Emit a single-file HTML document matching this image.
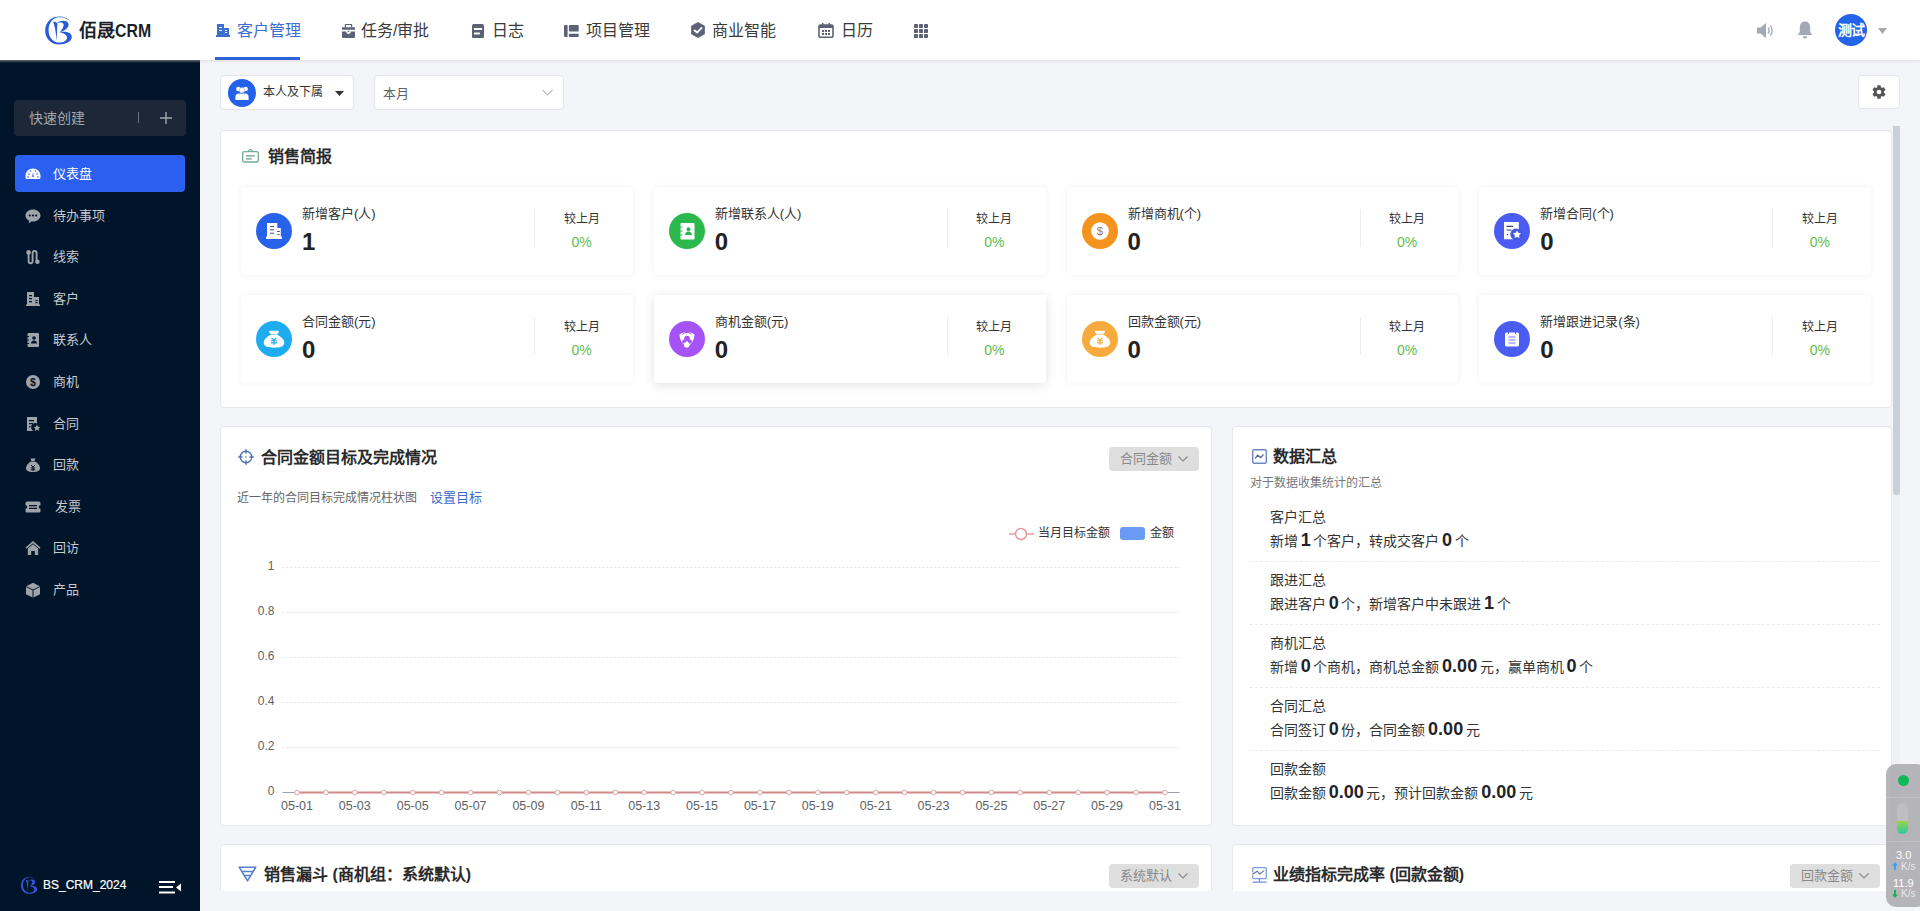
<!DOCTYPE html>
<html lang="zh-CN"><head><meta charset="utf-8">
<style>
*{box-sizing:border-box;margin:0;padding:0}
html,body{width:1920px;height:911px;overflow:hidden}
body{font-family:"Liberation Sans",sans-serif;background:#f3f5f9;position:relative;color:#333}
.abs{position:absolute}
#hdr{position:absolute;left:0;top:0;width:1920px;height:60px;background:#fff;box-shadow:0 1px 3px rgba(0,0,0,.10);z-index:5}
.nav{position:absolute;top:0;height:60px;display:flex;align-items:center;font-size:16px;color:#3a3a3a;white-space:nowrap}
.nav svg{display:block}
.nav span{position:relative;top:-1px}
#side{position:absolute;left:0;top:60px;width:200px;height:851px;background:#001529;z-index:4}
.mi{position:absolute;left:15px;width:170px;height:37px;border-radius:4px;color:#c6c9ce;font-size:13px;line-height:37px}
.mi .ic{position:absolute;left:10px;top:11px;width:16px;height:16px}
.mi .tx{position:absolute;left:38px;top:0}
#content{position:absolute;left:220px;top:126px;width:1680px;height:765px;overflow:hidden}
.panel{position:absolute;background:#fff;border:1px solid #e6e8ec;border-radius:4px}
.card{position:absolute;width:391.75px;height:88px;background:#fff;border-radius:3px;box-shadow:0 0 6px rgba(0,0,0,.06)}
.card .circ{position:absolute;left:15px;top:26px;width:36px;height:36px;border-radius:50%}
.card .lab{position:absolute;left:61px;top:18px;font-size:13px;color:#333;line-height:18px;white-space:nowrap}
.card .val{position:absolute;left:61px;top:41px;font-size:24px;font-weight:bold;color:#222;line-height:28px}
.card .div{position:absolute;left:293px;top:22px;width:1px;height:38px;background:#ececec}
.card .cmp{position:absolute;left:300px;width:81px;text-align:center;top:23.5px;font-size:12px;color:#333;line-height:16px}
.card .pct{position:absolute;left:300px;width:81px;text-align:center;top:46px;font-size:14px;color:#62bd4e;line-height:18px}
.ptitle{position:absolute;font-size:16px;font-weight:bold;color:#2a2a2a;line-height:20px;white-space:nowrap}
.btn{position:absolute;width:90px;height:24px;border-radius:4px;background:#dedede;font-size:13px;color:#888;line-height:24px}
.dl{position:absolute;left:37px;font-size:14px;color:#333;line-height:20px;white-space:nowrap}
.dv{position:absolute;left:37px;font-size:14px;color:#333;line-height:20px;white-space:nowrap;word-spacing:-1.2px}
.dv b{font-size:18px;color:#1f2329;font-weight:bold}
.dsep{position:absolute;left:17px;width:630px;height:0;border-top:1px dashed #ebebeb}
</style></head>
<body>
<div id="hdr">
  <!-- logo -->
  <svg class="abs" style="left:40px;top:10px" width="40" height="40" viewBox="0 0 40 40">
    <path d="M31.6 12.5C27 6.8 20.5 5.4 14.5 7.2 8 9.3 5.2 15 5.2 20.8 5.2 28.8 11 34.5 19 34.5 25 34.5 29.5 31.5 31.5 27.5 29 30.5 25 32.6 19.5 32.6 13 32.6 8.6 27.2 8.6 20.2 8.6 14.2 11.5 9.2 17 7.6 22 6.3 27.5 8.2 31.6 12.5Z" fill="#2a5bd7"/>
    <path d="M13 11.8C14.8 11.6 17.2 12 17.4 13.8L16.6 30.8C16.1 25.5 15.5 17.5 13 11.8Z" fill="#2a5bd7"/>
    <path d="M17 13.2C20.5 10.3 26.5 9.8 28.2 13 29.6 15.8 27.5 20 20 22.3 21.8 19.8 24 16.8 23.6 14.6 23.1 12.4 20 12.2 17 13.2Z" fill="#2a5bd7"/>
    <path d="M19.5 22.2C26 20.8 31.8 22.5 31.8 27 31.8 31 27 34.5 19.5 33.8 24 32.2 27.3 30 27 27.2 26.6 24.6 23.5 23 19.5 22.2Z" fill="#2a5bd7"/>
  </svg>
  <div class="abs" style="left:79px;top:18px;font-size:18px;font-weight:bold;color:#1b1f2a;line-height:26px;white-space:nowrap">佰晟<span style="display:inline-block;transform:scaleX(.88);transform-origin:0 50%">CRM</span></div>
  <div class="nav" style="left:216px;color:#3b6fd1">
    <svg width="14" height="14" viewBox="0 0 14 14"><path d="M1 1h7v11H1z M8 5h5v7H8z M0 12h14v2H0z" fill="#3b6fd1"/><path d="M3 4h3v1H3zM3 7h3v1H3zM9 7h2v1H9zM9 9h2v1H9z" fill="#fff"/></svg>
    <span style="margin-left:7px">客户管理</span>
  </div>
  <div class="abs" style="left:215px;top:57px;width:85px;height:3px;background:#2f64d6"></div>
  <div class="nav" style="left:341px">
    <svg width="13" height="14" viewBox="0 0 13 14" style="margin-left:1px;position:relative;top:1px"><path d="M3.4 3.2V1.3A1 1 0 0 1 4.4.3h4.2a1 1 0 0 1 1 1v1.9" fill="none" stroke="#5d6175" stroke-width="1.3"/><rect x="0" y="3.2" width="13" height="2.6" rx=".5" fill="#5d6175"/><path d="M0 7.5h4.1a2.4 2.4 0 0 0 4.8 0H13v5.3a1.2 1.2 0 0 1-1.2 1.2H1.2A1.2 1.2 0 0 1 0 12.8z" fill="#5d6175"/><circle cx="6.5" cy="7.4" r=".8" fill="#5d6175"/></svg>
    <span style="margin-left:6px">任务/审批</span>
  </div>
  <div class="nav" style="left:472px">
    <svg width="12" height="14" viewBox="0 0 12 14" style="position:relative;top:0.5px"><rect x="0" y="0" width="12" height="14.2" rx="1.8" fill="#5d6175"/><rect x="1.8" y="4" width="8.4" height="1.9" rx=".6" fill="#fff"/><rect x="1.8" y="8.6" width="6.2" height="1.8" rx=".6" fill="#fff"/></svg>
    <span style="margin-left:8px">日志</span>
  </div>
  <div class="nav" style="left:564px">
    <svg width="15" height="12" viewBox="0 0 15 12" style="position:relative;top:1px"><rect x="0" y="0" width="3.6" height="12" rx="1" fill="#5d6175"/><rect x="4.9" y="0" width="9.8" height="6.6" rx=".8" fill="#5d6175"/><rect x="4.9" y="8.8" width="9.8" height="3.2" rx=".8" fill="#5d6175"/></svg>
    <span style="margin-left:7px">项目管理</span>
  </div>
  <div class="nav" style="left:690px">
    <svg width="14" height="16" viewBox="0 0 14 16" style="margin-left:1px"><path d="M7 0.2L13.8 4.1v7.8L7 15.8 0.2 11.9V4.1z" fill="#5d6175" stroke="#5d6175" stroke-width=".4" stroke-linejoin="round"/><path d="M3.6 8.4l2.6 2.2 4.3-4.7" fill="none" stroke="#fff" stroke-width="1.9" stroke-linecap="round" stroke-linejoin="round"/></svg>
    <span style="margin-left:6.5px">商业智能</span>
  </div>
  <div class="nav" style="left:818px">
    <svg width="16" height="15" viewBox="0 0 16 15"><rect x="1" y="2" width="14" height="12.3" rx="1.5" fill="none" stroke="#5d6175" stroke-width="1.6"/><rect x="1" y="2" width="14" height="3" fill="#5d6175"/><rect x="4" y="0" width="1.5" height="3" fill="#5d6175"/><rect x="10.5" y="0" width="1.5" height="3" fill="#5d6175"/><path d="M4 7h2v2H4zM7 7h2v2H7zM10 7h2v2h-2zM4 10h2v2H4zM7 10h2v2H7zM10 10h2v2h-2z" fill="#5d6175"/></svg>
    <span style="margin-left:7px">日历</span>
  </div>
  <svg class="abs" style="left:914px;top:24px" width="14" height="14" viewBox="0 0 14 14"><g fill="#5d6175"><rect x="0" y="0" width="4" height="4" rx=".8"/><rect x="5" y="0" width="4" height="4" rx=".8"/><rect x="10" y="0" width="4" height="4" rx=".8"/><rect x="0" y="5" width="4" height="4" rx=".8"/><rect x="5" y="5" width="4" height="4" rx=".8"/><rect x="10" y="5" width="4" height="4" rx=".8"/><rect x="0" y="10" width="4" height="4" rx=".8"/><rect x="5" y="10" width="4" height="4" rx=".8"/><rect x="10" y="10" width="4" height="4" rx=".8"/></g></svg>
  <!-- right -->
  <svg class="abs" style="left:1757px;top:22px" width="17" height="17" viewBox="0 0 17 17"><path d="M0 5.5h3.5L9 1v15L3.5 11.5H0z" fill="#a3a9b7"/><path d="M11 5.5c1.3 1.5 1.3 4.5 0 6M13.3 3.5c2.4 2.6 2.4 7.4 0 10" fill="none" stroke="#a3a9b7" stroke-width="1.3"/></svg>
  <svg class="abs" style="left:1797px;top:21px" width="16" height="18" viewBox="0 0 16 18"><path d="M8 0.5c3.4 0 5.2 2.6 5.2 6v4.5L15.5 14H.5l2.3-3V6.5C2.8 3.1 4.6.5 8 .5z" fill="#a3a9b7"/><path d="M5.8 15.3h4.4a2.2 2.2 0 0 1-4.4 0z" fill="#a3a9b7"/></svg>
  <div class="abs" style="left:1835px;top:14px;width:32px;height:32px;border-radius:50%;background:#2464ea;color:#fff;font-size:14px;font-weight:bold;line-height:32px;text-align:center;letter-spacing:-1px">测试</div>
  <svg class="abs" style="left:1878px;top:28px" width="9" height="6" viewBox="0 0 9 6"><path d="M0 0h9L4.5 6z" fill="#a8a8a8"/></svg>
</div>

<div id="side">
  <div class="abs" style="left:0;top:0;width:200px;height:3px;background:linear-gradient(rgba(190,195,200,.55),rgba(190,195,200,0))"></div>
  <div class="abs" style="left:14px;top:40px;width:172px;height:36px;background:#1c2838;border-radius:4px;color:#a3a7ae;font-size:14px;line-height:36px">
    <span class="abs" style="left:15px">快速创建</span>
    <span class="abs" style="left:124px;top:12px;width:1px;height:11px;background:#6b727c"></span>
    <svg class="abs" style="left:146px;top:12px" width="12" height="12" viewBox="0 0 12 12"><path d="M6 0v12M0 6h12" stroke="#a3a7ae" stroke-width="1.4"/></svg>
  </div>
  <div class="mi" style="top:95px;background:#2a5ff0;color:#fff">
    <svg class="ic" viewBox="0 0 16 16"><path d="M8 2.5C3.8 2.5.5 5.7.5 9.8v1.7a1.5 1.5 0 0 0 1.5 1.5h12a1.5 1.5 0 0 0 1.5-1.5V9.8c0-4.1-3.3-7.3-7.5-7.3z" fill="#fff"/><path d="M8 6l-.8 5h1.6z" fill="#2a5ff0"/><circle cx="4" cy="8" r=".8" fill="#2a5ff0"/><circle cx="12" cy="8" r=".8" fill="#2a5ff0"/><circle cx="5.5" cy="5" r=".8" fill="#2a5ff0"/><circle cx="10.5" cy="5" r=".8" fill="#2a5ff0"/><circle cx="3" cy="11" r=".8" fill="#2a5ff0"/><circle cx="13" cy="11" r=".8" fill="#2a5ff0"/></svg>
    <span class="tx">仪表盘</span>
  </div>
  <div class="mi" style="top:136.6px">
    <svg class="ic" viewBox="0 0 16 16"><path d="M8 1.5c4.2 0 7.5 2.7 7.5 6s-3.3 6-7.5 6c-.6 0-1.2 0-1.7-.1L3.8 15.5 4 12.6C1.9 11.5.5 9.6.5 7.5c0-3.3 3.3-6 7.5-6z" fill="#9ea2a9"/><circle cx="4.8" cy="7.5" r="1.1" fill="#001529"/><circle cx="8" cy="7.5" r="1.1" fill="#001529"/><circle cx="11.2" cy="7.5" r="1.1" fill="#001529"/></svg>
    <span class="tx">待办事项</span>
  </div>
  <div class="mi" style="top:178.2px">
    <svg class="ic" viewBox="0 0 16 16"><circle cx="3.6" cy="3.4" r="2.3" fill="#9ea2a9"/><circle cx="12.4" cy="12.8" r="2.3" fill="#9ea2a9"/><path d="M3.6 4v8.3a2 2 0 0 0 4 0V4a2 2 0 0 1 4 0v8" fill="none" stroke="#9ea2a9" stroke-width="1.9"/></svg>
    <span class="tx">线索</span>
  </div>
  <div class="mi" style="top:219.8px">
    <svg class="ic" viewBox="0 0 16 16"><path d="M2 1h7v12.5H2z M9 6h5v7.5H9z M1 13.5h14V15H1z" fill="#9ea2a9"/><path d="M4 4h3v1.2H4zM4 7h3v1.2H4zM4 10h3v1.2H4zM10.5 9h2v1.2h-2zM10.5 11h2v1.2h-2z" fill="#001529"/></svg>
    <span class="tx">客户</span>
  </div>
  <div class="mi" style="top:261.4px">
    <svg class="ic" viewBox="0 0 16 16"><rect x="2.5" y="1" width="11.5" height="14" rx="1.2" fill="#9ea2a9"/><path d="M1.5 4h2.5v1H1.5zM1.5 7.5h2.5v1H1.5zM1.5 11h2.5v1H1.5z" fill="#001529"/><circle cx="9" cy="6" r="1.8" fill="#001529"/><path d="M5.8 11.5c.5-2 1.7-3 3.2-3s2.7 1 3.2 3z" fill="#001529"/></svg>
    <span class="tx">联系人</span>
  </div>
  <div class="mi" style="top:303px">
    <svg class="ic" viewBox="0 0 16 16"><circle cx="8" cy="8" r="7" fill="#9ea2a9"/><text x="8" y="11.8" font-size="10.5" text-anchor="middle" fill="#001529" font-family="Liberation Sans" font-weight="bold">$</text></svg>
    <span class="tx">商机</span>
  </div>
  <div class="mi" style="top:344.6px">
    <svg class="ic" viewBox="0 0 16 16"><path d="M2 1h10v6.5a4 4 0 0 0-3.5 7.5H2z" fill="#9ea2a9"/><path d="M4 4h5v1.2H4zM4 7h4v1.2H4zM4 10h1.5v1.2H4z" fill="#001529"/><path d="M12 8.5l1.1 2.2 2.4.3-1.8 1.6.5 2.4-2.2-1.2-2.2 1.2.5-2.4L8.5 11l2.4-.3z" fill="#9ea2a9"/></svg>
    <span class="tx">合同</span>
  </div>
  <div class="mi" style="top:386.2px">
    <svg class="ic" viewBox="0 0 16 16"><path d="M5.5 1.5h5l-1 2.5h-3z" fill="#9ea2a9"/><path d="M6 4.5h4c3 1.5 5 4 5 6.5 0 2.8-2.5 4-7 4s-7-1.2-7-4c0-2.5 2-5 5-6.5z" fill="#9ea2a9"/><path d="M6 8l2 2 2-2M5.8 11h4.4M5.8 12.8h4.4M8 10v4" fill="none" stroke="#001529" stroke-width="1"/></svg>
    <span class="tx">回款</span>
  </div>
  <div class="mi" style="top:427.8px">
    <svg class="ic" viewBox="0 0 16 16"><path d="M2 2.5h12a1.5 1.5 0 0 1 1.5 1.5v2.3a1.7 1.7 0 0 0 0 3.4V12a1.5 1.5 0 0 1-1.5 1.5H2A1.5 1.5 0 0 1 .5 12V9.7a1.7 1.7 0 0 0 0-3.4V4A1.5 1.5 0 0 1 2 2.5z" fill="#9ea2a9"/><path d="M4 6h8v1.3H4zM4 8.8h8v1.3H4z" fill="#001529"/></svg>
    <span class="tx" style="left:40px">发票</span>
  </div>
  <div class="mi" style="top:469.4px">
    <svg class="ic" viewBox="0 0 16 16"><path d="M8 1L.5 7.5l1 1.2L8 3.2l6.5 5.5 1-1.2z" fill="#9ea2a9"/><path d="M2.8 8.5L8 4.2l5.2 4.3V15H9.8v-4H6.2v4H2.8z" fill="#9ea2a9"/></svg>
    <span class="tx">回访</span>
  </div>
  <div class="mi" style="top:511px">
    <svg class="ic" viewBox="0 0 16 16"><path d="M8 .8l6.8 3.4L8 7.6 1.2 4.2z" fill="#9ea2a9"/><path d="M1 5l6.5 3.3v7.2L1 12.2z" fill="#9ea2a9"/><path d="M15 5L8.5 8.3v7.2l6.5-3.3z" fill="#9ea2a9"/></svg>
    <span class="tx">产品</span>
  </div>
  <!-- bottom -->
  <svg class="abs" style="left:19px;top:814px" width="22" height="22" viewBox="2 2 36 36"><path d="M31.6 12.5C27 6.8 20.5 5.4 14.5 7.2 8 9.3 5.2 15 5.2 20.8 5.2 28.8 11 34.5 19 34.5 25 34.5 29.5 31.5 31.5 27.5 29 30.5 25 32.6 19.5 32.6 13 32.6 8.6 27.2 8.6 20.2 8.6 14.2 11.5 9.2 17 7.6 22 6.3 27.5 8.2 31.6 12.5Z" fill="#3355d6"/>
    <path d="M13 11.8C14.8 11.6 17.2 12 17.4 13.8L16.6 30.8C16.1 25.5 15.5 17.5 13 11.8Z" fill="#3355d6"/>
    <path d="M17 13.2C20.5 10.3 26.5 9.8 28.2 13 29.6 15.8 27.5 20 20 22.3 21.8 19.8 24 16.8 23.6 14.6 23.1 12.4 20 12.2 17 13.2Z" fill="#3355d6"/>
    <path d="M19.5 22.2C26 20.8 31.8 22.5 31.8 27 31.8 31 27 34.5 19.5 33.8 24 32.2 27.3 30 27 27.2 26.6 24.6 23.5 23 19.5 22.2Z" fill="#3355d6"/>
  </svg>
  <div class="abs" style="left:43px;top:816px;font-size:12px;color:#fff;line-height:18px;-webkit-text-stroke:.2px #fff">BS_CRM_2024</div>
  <svg class="abs" style="left:159px;top:821px" width="22" height="13" viewBox="0 0 22 13"><path d="M0 0h16v2H0zM0 5h14v2H0zM0 10.5h16v2H0z" fill="#fff"/><path d="M22 2.5v8L17 6.5z" fill="#fff"/></svg>
</div>

<!-- filter row -->
<div class="abs" style="left:220px;top:75px;width:134px;height:35px;background:#fff;border:1px solid #e4e6ea;border-radius:4px">
  <div class="abs" style="left:7px;top:3px;width:28px;height:28px;border-radius:50%;background:#2361ec"></div>
  <svg class="abs" style="left:14px;top:10px" width="14" height="14" viewBox="0 0 14 14"><circle cx="3.4" cy="3" r="2.3" fill="#fff"/><circle cx="10.6" cy="3" r="2.3" fill="#fff"/><path d="M0.4 14v-3c0-2.2 1.3-3.6 3.2-3.6h6.8c1.9 0 3.2 1.4 3.2 3.6v3z" fill="#fff"/><circle cx="7" cy="4.2" r="2.7" fill="#fff" stroke="#8aa0d8" stroke-width=".5"/><path d="M3.6 9.2c.6-1.2 1.8-1.8 3.4-1.8s2.8.6 3.4 1.8" fill="none" stroke="#8aa0d8" stroke-width=".5"/></svg>
  <div class="abs" style="left:42px;top:7px;font-size:12px;color:#333;line-height:18px">本人及下属</div>
  <svg class="abs" style="left:114px;top:15px" width="9" height="5" viewBox="0 0 9 5"><path d="M0 0h9L4.5 5z" fill="#333"/></svg>
</div>
<div class="abs" style="left:374px;top:75px;width:190px;height:35px;background:#fff;border:1px solid #e4e6ea;border-radius:4px">
  <div class="abs" style="left:8px;top:9px;font-size:13px;color:#606266;line-height:18px">本月</div>
  <svg class="abs" style="left:167px;top:13px" width="11" height="7" viewBox="0 0 11 7"><path d="M.5 .8L5.5 5.8 10.5 .8" fill="none" stroke="#b8bcc4" stroke-width="1.2"/></svg>
</div>
<div class="abs" style="left:1858px;top:75px;width:42px;height:34px;background:#fff;border:1px solid #e4e6ea;border-radius:4px">
  <svg class="abs" style="left:12px;top:8px" width="16" height="16" viewBox="0 0 24 24"><path d="M19.4 13c.04-.33.06-.66.06-1s-.02-.67-.06-1l2.1-1.65c.2-.15.25-.42.12-.64l-2-3.46c-.12-.22-.39-.3-.61-.22l-2.49 1c-.52-.4-1.08-.73-1.69-.98l-.38-2.65A.49.49 0 0 0 14 2h-4c-.25 0-.46.18-.49.42l-.38 2.65c-.61.25-1.17.59-1.69.98l-2.49-1c-.23-.09-.49 0-.61.22l-2 3.46c-.13.22-.07.49.12.64L4.57 11c-.04.33-.07.67-.07 1s.03.67.07 1l-2.11 1.65c-.19.15-.24.42-.12.64l2 3.46c.12.22.39.3.61.22l2.49-1c.52.4 1.08.73 1.69.98l.38 2.65c.03.24.24.42.49.42h4c.25 0 .46-.18.49-.42l.38-2.65c.61-.25 1.17-.59 1.69-.98l2.49 1c.23.09.49 0 .61-.22l2-3.46c.12-.22.07-.49-.12-.64zM12 15.5a3.5 3.5 0 1 1 0-7 3.5 3.5 0 0 1 0 7z" fill="#555"/></svg>
</div>

<div id="content">
<div class="panel" style="left:0;top:4px;width:1672px;height:278px">
<svg class="abs" style="left:21px;top:16.5px" width="17" height="16" viewBox="0 0 17 16"><rect x="0.7" y="3.6" width="15.6" height="10.4" rx="1.6" fill="none" stroke="#6fae93" stroke-width="1.3"/><path d="M6.3 3.6a2 2 0 0 1 4 0" fill="none" stroke="#6fae93" stroke-width="1.3"/><path d="M4 7.8h8.7M4 10.8h5.8" stroke="#6a9a88" stroke-width="1.2"/></svg>
<div class="ptitle" style="left:47px;top:16px">销售简报</div>
<div class="card" style="left:20.00px;top:56px"><svg class="abs" style="left:15px;top:26px" width="36" height="36" viewBox="-18 -18 36 36"><circle r="18" fill="#2962ea"/><path d="M-7-8.1h10.3v13.8H-7z M3.2-2.9h3.6v8.6H3.2z M-7.9 5.5h15.8v2.6h-15.8z" fill="#fff"/><path d="M-4-5.1h4v1.1h-4zM-4-1.8h4v1.1h-4zM-4 1.7h4v1.1h-4zM3.2 0h2.6v.9H3.2zM3.2 2.9h2.6v.9H3.2z" fill="#3f4f78"/></svg><div class="lab">新增客户(人)</div><div class="val">1</div><div class="div"></div><div class="cmp">较上月</div><div class="pct">0%</div></div>
<div class="card" style="left:432.75px;top:56px"><svg class="abs" style="left:15px;top:26px" width="36" height="36" viewBox="-18 -18 36 36"><circle r="18" fill="#2db84e"/><rect x="-6.5" y="-8" width="14" height="16.5" rx="1" fill="#fff"/><path d="M-7.5-4.5h3v1.1h-3zM-7.5-0.5h3v1.1h-3zM-7.5 3.5h3v1.1h-3z" fill="#2db84e"/><circle cx="1.5" cy="-1.8" r="2" fill="#2db84e"/><path d="M-2.2 4c.5-2.5 2-3.5 3.7-3.5s3.2 1 3.7 3.5z" fill="#2db84e"/></svg><div class="lab">新增联系人(人)</div><div class="val">0</div><div class="div"></div><div class="cmp">较上月</div><div class="pct">0%</div></div>
<div class="card" style="left:845.50px;top:56px"><svg class="abs" style="left:15px;top:26px" width="36" height="36" viewBox="-18 -18 36 36"><circle r="18" fill="#f5931f"/><circle cx="0" cy="0" r="8.8" fill="#fff"/><text x="0" y="4.2" font-size="11.5" text-anchor="middle" fill="#9c7a55" font-family="Liberation Sans">$</text></svg><div class="lab">新增商机(个)</div><div class="val">0</div><div class="div"></div><div class="cmp">较上月</div><div class="pct">0%</div></div>
<div class="card" style="left:1258.25px;top:56px"><svg class="abs" style="left:15px;top:26px" width="36" height="36" viewBox="-18 -18 36 36"><circle r="18" fill="#4b5cf0"/><path d="M-8-9h14.8v7.2a5.6 5.6 0 0 0-5.6 10H-8z" fill="#fff"/><path d="M-5.5-5.2h6.6v1.1h-6.6zM-5.5-1.5h5v1.1h-5zM-5.2 3h1.2v1.2h-1.2z" fill="#3b4470"/><circle cx="5" cy="3.6" r="4.9" fill="none" stroke="#3b4470" stroke-width=".6" opacity=".6"/><path d="M5.00 -0.60L6.29 1.82L8.99 2.30L7.09 4.28L7.47 7.00L5.00 5.80L2.53 7.00L2.91 4.28L1.01 2.30L3.71 1.82z" fill="#fff"/></svg><div class="lab">新增合同(个)</div><div class="val">0</div><div class="div"></div><div class="cmp">较上月</div><div class="pct">0%</div></div>
<div class="card" style="left:20.00px;top:164px"><svg class="abs" style="left:15px;top:26px" width="36" height="36" viewBox="-18 -18 36 36"><circle r="18" fill="#1eabf0"/><path d="M-4.2-8.2h8.4c.8 0 1 .8.6 1.4l-1.6 2.2h-6.4l-1.6-2.2c-.4-.6-.2-1.4.6-1.4z" fill="#fff"/><path d="M-3.8-4h7.6c4 2 6.5 4.8 6.5 7.6 0 3.6-3.2 5.2-10.3 5.2s-10.3-1.6-10.3-5.2c0-2.8 2.5-5.6 6.5-7.6z" fill="#fff"/><path d="M-2.4 -1.2l2.4 2.4 2.4-2.4M-3 1.8h6M-3 3.9h6M0 1.2v4.8" fill="none" stroke="#1eabf0" stroke-width="1.1"/></svg><div class="lab">合同金额(元)</div><div class="val">0</div><div class="div"></div><div class="cmp">较上月</div><div class="pct">0%</div></div>
<div class="card" style="left:432.75px;top:164px;box-shadow:0 2px 12px rgba(0,0,0,.12)"><svg class="abs" style="left:15px;top:26px" width="36" height="36" viewBox="-18 -18 36 36"><circle r="18" fill="#a653f6"/><path d="M-7.5-4.5c3.5-3.5 11.5-3.5 15 0 0 5.5-3.5 10-7.5 12.5-4-2.5-7.5-7-7.5-12.5z" fill="#fff"/><circle cx="0" cy="-0.5" r="2.8" fill="#a653f6"/><circle cx="-2.8" cy="2.6" r="2.1" fill="#a653f6"/><circle cx="2.8" cy="2.6" r="2.1" fill="#a653f6"/><circle cx="-0.3" cy="5.8" r="2.8" fill="#fff"/><path d="M-4.5-4.6a6 6 0 0 1 9 0" fill="none" stroke="#a653f6" stroke-width="1"/></svg><div class="lab">商机金额(元)</div><div class="val">0</div><div class="div"></div><div class="cmp">较上月</div><div class="pct">0%</div></div>
<div class="card" style="left:845.50px;top:164px"><svg class="abs" style="left:15px;top:26px" width="36" height="36" viewBox="-18 -18 36 36"><circle r="18" fill="#f7ab3c"/><path d="M-4.2-8.2h8.4c.8 0 1 .8.6 1.4l-1.6 2.2h-6.4l-1.6-2.2c-.4-.6-.2-1.4.6-1.4z" fill="#fff"/><path d="M-3.8-4h7.6c4 2 6.5 4.8 6.5 7.6 0 3.6-3.2 5.2-10.3 5.2s-10.3-1.6-10.3-5.2c0-2.8 2.5-5.6 6.5-7.6z" fill="#fff"/><path d="M-2.4 -1.2l2.4 2.4 2.4-2.4M-3 1.8h6M-3 3.9h6M0 1.2v4.8" fill="none" stroke="#f7ab3c" stroke-width="1.1"/></svg><div class="lab">回款金额(元)</div><div class="val">0</div><div class="div"></div><div class="cmp">较上月</div><div class="pct">0%</div></div>
<div class="card" style="left:1258.25px;top:164px"><svg class="abs" style="left:15px;top:26px" width="36" height="36" viewBox="-18 -18 36 36"><circle r="18" fill="#4b5cf0"/><rect x="-7" y="-6.5" width="14" height="14" rx="1.5" fill="#fff"/><path d="M-3.5-8v3M3.5-8v3" stroke="#4b5cf0" stroke-width="1"/><path d="M-3.5-2h7M-3.5 1h7M-3.5 4h7" stroke="#4b5cf0" stroke-width="1.1" opacity=".8"/></svg><div class="lab">新增跟进记录(条)</div><div class="val">0</div><div class="div"></div><div class="cmp">较上月</div><div class="pct">0%</div></div>
</div><div class="panel" style="left:0;top:300px;width:992px;height:400px">
<svg class="abs" style="left:17px;top:22px" width="16" height="16" viewBox="0 0 16 16"><circle cx="8" cy="8" r="5.8" fill="none" stroke="#4f70b8" stroke-width="1.4"/><path d="M8 0.3v4.2M8 11.5v4.2M0.3 8h4.2M11.5 8h4.2" stroke="#4f70b8" stroke-width="1.5"/><rect x="7.3" y="7.3" width="1.4" height="1.4" fill="#6b7fa8"/></svg>
<div class="ptitle" style="left:40px;top:21px">合同金额目标及完成情况</div>
<div class="btn" style="left:888px;top:20px"><span class="abs" style="left:11px;top:0">合同金额</span><svg class="abs" style="left:69px;top:9px" width="10" height="6" viewBox="0 0 10 6"><path d="M.5.5l4.5 4.5 4.5-4.5" fill="none" stroke="#888" stroke-width="1.1"/></svg></div>
<div class="abs" style="left:16px;top:62px;font-size:12px;color:#666;line-height:18px;white-space:nowrap">近一年的合同目标完成情况柱状图</div>
<div class="abs" style="left:209px;top:61px;font-size:13px;color:#3d6bc9;line-height:19px">设置目标</div>
<svg class="abs" style="left:787px;top:99px" width="27" height="16" viewBox="0 0 27 16"><path d="M1 8h25" stroke="#e99a9a" stroke-width="1.5"/><circle cx="13" cy="8" r="5.5" fill="#fff" stroke="#e99a9a" stroke-width="1.5"/></svg>
<div class="abs" style="left:817px;top:97px;font-size:12px;color:#333;line-height:18px">当月目标金额</div>
<div class="abs" style="left:899px;top:100px;width:25px;height:13px;border-radius:3px;background:#6a9bf4"></div>
<div class="abs" style="left:929px;top:97px;font-size:12px;color:#333;line-height:18px">金额</div>
<svg class="abs" style="left:0;top:0" width="992" height="400"><text x="53.5" y="367.5" text-anchor="end" font-size="12" fill="#606266" font-family="Liberation Sans">0</text><line x1="61.5" y1="320.5" x2="958.5" y2="320.5" stroke="#e0e3e8" stroke-width="1" stroke-dasharray="2 2"/><text x="53.5" y="322.5" text-anchor="end" font-size="12" fill="#606266" font-family="Liberation Sans">0.2</text><line x1="61.5" y1="275.5" x2="958.5" y2="275.5" stroke="#e0e3e8" stroke-width="1" stroke-dasharray="2 2"/><text x="53.5" y="277.5" text-anchor="end" font-size="12" fill="#606266" font-family="Liberation Sans">0.4</text><line x1="61.5" y1="230.5" x2="958.5" y2="230.5" stroke="#e0e3e8" stroke-width="1" stroke-dasharray="2 2"/><text x="53.5" y="232.5" text-anchor="end" font-size="12" fill="#606266" font-family="Liberation Sans">0.6</text><line x1="61.5" y1="185.5" x2="958.5" y2="185.5" stroke="#e0e3e8" stroke-width="1" stroke-dasharray="2 2"/><text x="53.5" y="187.5" text-anchor="end" font-size="12" fill="#606266" font-family="Liberation Sans">0.8</text><line x1="61.5" y1="140.5" x2="958.5" y2="140.5" stroke="#e0e3e8" stroke-width="1" stroke-dasharray="2 2"/><text x="53.5" y="142.5" text-anchor="end" font-size="12" fill="#606266" font-family="Liberation Sans">1</text><line x1="61.5" y1="365.5" x2="958.5" y2="365.5" stroke="#9aa0a8" stroke-width="1"/><polyline points="76.0,365.5 104.9,365.5 133.8,365.5 162.8,365.5 191.7,365.5 220.6,365.5 249.6,365.5 278.5,365.5 307.4,365.5 336.4,365.5 365.3,365.5 394.3,365.5 423.2,365.5 452.1,365.5 481.1,365.5 510.0,365.5 538.9,365.5 567.9,365.5 596.8,365.5 625.7,365.5 654.7,365.5 683.6,365.5 712.5,365.5 741.5,365.5 770.4,365.5 799.3,365.5 828.3,365.5 857.2,365.5 886.1,365.5 915.1,365.5 944.0,365.5" fill="none" stroke="#d08a8a" stroke-width="2.2"/><circle cx="76.0" cy="365.5" r="2.3" fill="#fff" stroke="#e2a3a3" stroke-width="1"/><circle cx="104.9" cy="365.5" r="2.3" fill="#fff" stroke="#e2a3a3" stroke-width="1"/><circle cx="133.8" cy="365.5" r="2.3" fill="#fff" stroke="#e2a3a3" stroke-width="1"/><circle cx="162.8" cy="365.5" r="2.3" fill="#fff" stroke="#e2a3a3" stroke-width="1"/><circle cx="191.7" cy="365.5" r="2.3" fill="#fff" stroke="#e2a3a3" stroke-width="1"/><circle cx="220.6" cy="365.5" r="2.3" fill="#fff" stroke="#e2a3a3" stroke-width="1"/><circle cx="249.6" cy="365.5" r="2.3" fill="#fff" stroke="#e2a3a3" stroke-width="1"/><circle cx="278.5" cy="365.5" r="2.3" fill="#fff" stroke="#e2a3a3" stroke-width="1"/><circle cx="307.4" cy="365.5" r="2.3" fill="#fff" stroke="#e2a3a3" stroke-width="1"/><circle cx="336.4" cy="365.5" r="2.3" fill="#fff" stroke="#e2a3a3" stroke-width="1"/><circle cx="365.3" cy="365.5" r="2.3" fill="#fff" stroke="#e2a3a3" stroke-width="1"/><circle cx="394.3" cy="365.5" r="2.3" fill="#fff" stroke="#e2a3a3" stroke-width="1"/><circle cx="423.2" cy="365.5" r="2.3" fill="#fff" stroke="#e2a3a3" stroke-width="1"/><circle cx="452.1" cy="365.5" r="2.3" fill="#fff" stroke="#e2a3a3" stroke-width="1"/><circle cx="481.1" cy="365.5" r="2.3" fill="#fff" stroke="#e2a3a3" stroke-width="1"/><circle cx="510.0" cy="365.5" r="2.3" fill="#fff" stroke="#e2a3a3" stroke-width="1"/><circle cx="538.9" cy="365.5" r="2.3" fill="#fff" stroke="#e2a3a3" stroke-width="1"/><circle cx="567.9" cy="365.5" r="2.3" fill="#fff" stroke="#e2a3a3" stroke-width="1"/><circle cx="596.8" cy="365.5" r="2.3" fill="#fff" stroke="#e2a3a3" stroke-width="1"/><circle cx="625.7" cy="365.5" r="2.3" fill="#fff" stroke="#e2a3a3" stroke-width="1"/><circle cx="654.7" cy="365.5" r="2.3" fill="#fff" stroke="#e2a3a3" stroke-width="1"/><circle cx="683.6" cy="365.5" r="2.3" fill="#fff" stroke="#e2a3a3" stroke-width="1"/><circle cx="712.5" cy="365.5" r="2.3" fill="#fff" stroke="#e2a3a3" stroke-width="1"/><circle cx="741.5" cy="365.5" r="2.3" fill="#fff" stroke="#e2a3a3" stroke-width="1"/><circle cx="770.4" cy="365.5" r="2.3" fill="#fff" stroke="#e2a3a3" stroke-width="1"/><circle cx="799.3" cy="365.5" r="2.3" fill="#fff" stroke="#e2a3a3" stroke-width="1"/><circle cx="828.3" cy="365.5" r="2.3" fill="#fff" stroke="#e2a3a3" stroke-width="1"/><circle cx="857.2" cy="365.5" r="2.3" fill="#fff" stroke="#e2a3a3" stroke-width="1"/><circle cx="886.1" cy="365.5" r="2.3" fill="#fff" stroke="#e2a3a3" stroke-width="1"/><circle cx="915.1" cy="365.5" r="2.3" fill="#fff" stroke="#e2a3a3" stroke-width="1"/><circle cx="944.0" cy="365.5" r="2.3" fill="#fff" stroke="#e2a3a3" stroke-width="1"/><text x="76.0" y="382.5" text-anchor="middle" font-size="12.5" fill="#606266" font-family="Liberation Sans">05-01</text><text x="133.8" y="382.5" text-anchor="middle" font-size="12.5" fill="#606266" font-family="Liberation Sans">05-03</text><text x="191.7" y="382.5" text-anchor="middle" font-size="12.5" fill="#606266" font-family="Liberation Sans">05-05</text><text x="249.6" y="382.5" text-anchor="middle" font-size="12.5" fill="#606266" font-family="Liberation Sans">05-07</text><text x="307.4" y="382.5" text-anchor="middle" font-size="12.5" fill="#606266" font-family="Liberation Sans">05-09</text><text x="365.3" y="382.5" text-anchor="middle" font-size="12.5" fill="#606266" font-family="Liberation Sans">05-11</text><text x="423.2" y="382.5" text-anchor="middle" font-size="12.5" fill="#606266" font-family="Liberation Sans">05-13</text><text x="481.1" y="382.5" text-anchor="middle" font-size="12.5" fill="#606266" font-family="Liberation Sans">05-15</text><text x="538.9" y="382.5" text-anchor="middle" font-size="12.5" fill="#606266" font-family="Liberation Sans">05-17</text><text x="596.8" y="382.5" text-anchor="middle" font-size="12.5" fill="#606266" font-family="Liberation Sans">05-19</text><text x="654.7" y="382.5" text-anchor="middle" font-size="12.5" fill="#606266" font-family="Liberation Sans">05-21</text><text x="712.5" y="382.5" text-anchor="middle" font-size="12.5" fill="#606266" font-family="Liberation Sans">05-23</text><text x="770.4" y="382.5" text-anchor="middle" font-size="12.5" fill="#606266" font-family="Liberation Sans">05-25</text><text x="828.3" y="382.5" text-anchor="middle" font-size="12.5" fill="#606266" font-family="Liberation Sans">05-27</text><text x="886.1" y="382.5" text-anchor="middle" font-size="12.5" fill="#606266" font-family="Liberation Sans">05-29</text><text x="944.0" y="382.5" text-anchor="middle" font-size="12.5" fill="#606266" font-family="Liberation Sans">05-31</text></svg>
</div><div class="panel" style="left:1012px;top:300px;width:660px;height:400px">
<svg class="abs" style="left:18.5px;top:22px" width="15" height="15" viewBox="0 0 15 15"><rect x="0.7" y="0.7" width="13.6" height="13.6" rx="1.5" fill="none" stroke="#6a86c8" stroke-width="1.4"/><path d="M3.2 9.5l2.4-3.3 3.2 2.4 2.6-3.1" fill="none" stroke="#56689a" stroke-width="1.3"/></svg>
<div class="ptitle" style="left:40px;top:20px">数据汇总</div>
<div class="abs" style="left:17px;top:47px;font-size:12px;color:#777;line-height:18px;white-space:nowrap">对于数据收集统计的汇总</div>
<div class="dl" style="top:80.0px">客户汇总</div><div class="dv" style="top:102.5px">新增 <b>1</b> 个客户，转成交客户 <b>0</b> 个</div>
<div class="dsep" style="top:134px"></div>
<div class="dl" style="top:143.0px">跟进汇总</div><div class="dv" style="top:165.5px">跟进客户 <b>0</b> 个，新增客户中未跟进 <b>1</b> 个</div>
<div class="dsep" style="top:197px"></div>
<div class="dl" style="top:206.0px">商机汇总</div><div class="dv" style="top:228.5px">新增 <b>0</b> 个商机，商机总金额 <b>0.00</b> 元，赢单商机 <b>0</b> 个</div>
<div class="dsep" style="top:260px"></div>
<div class="dl" style="top:269.0px">合同汇总</div><div class="dv" style="top:291.5px">合同签订 <b>0</b> 份，合同金额 <b>0.00</b> 元</div>
<div class="dsep" style="top:323px"></div>
<div class="dl" style="top:332.0px">回款金额</div><div class="dv" style="top:354.5px">回款金额 <b>0.00</b> 元，预计回款金额 <b>0.00</b> 元</div>
</div><div class="panel" style="left:0;top:718px;width:992px;height:200px">
<svg class="abs" style="left:17px;top:21px" width="19" height="16" viewBox="0 0 19 16"><path d="M1.2 1.2h16.6L9.5 14.8z" fill="none" stroke="#5a7fc9" stroke-width="1.6" stroke-linejoin="round"/><path d="M4 5.5h11M6.5 9.5h6" stroke="#5a7fc9" stroke-width="1.5"/></svg>
<div class="ptitle" style="left:43px;top:20px">销售漏斗 (商机组：系统默认)</div>
<div class="btn" style="left:888px;top:19px"><span class="abs" style="left:11px;top:0">系统默认</span><svg class="abs" style="left:69px;top:9px" width="10" height="6" viewBox="0 0 10 6"><path d="M.5.5l4.5 4.5 4.5-4.5" fill="none" stroke="#888" stroke-width="1.1"/></svg></div>
</div>
<div class="panel" style="left:1012px;top:718px;width:660px;height:200px">
<svg class="abs" style="left:19px;top:22px" width="15" height="16" viewBox="0 0 15 16"><path d="M0.7 5.2V1.9A1.2 1.2 0 0 1 1.9 0.7h11.2a1.2 1.2 0 0 1 1.2 1.2v8.6a1.2 1.2 0 0 1-1.2 1.2H1.9A1.2 1.2 0 0 1 0.7 10.5V8.2" fill="none" stroke="#7f9ddc" stroke-width="1.3"/><path d="M0.3 7.3L5.2 4.2 7.6 7 12.2 3.6" fill="none" stroke="#56709e" stroke-width="1.1"/><path d="M7.5 11.5v3.2M0.5 15.2h14" stroke="#6f8fd6" stroke-width="1.2"/></svg>
<div class="ptitle" style="left:40px;top:20px">业绩指标完成率 (回款金额)</div>
<div class="btn" style="left:557px;top:19px"><span class="abs" style="left:11px;top:0">回款金额</span><svg class="abs" style="left:69px;top:9px" width="10" height="6" viewBox="0 0 10 6"><path d="M.5.5l4.5 4.5 4.5-4.5" fill="none" stroke="#888" stroke-width="1.1"/></svg></div>
</div><div class="abs" style="left:1673px;top:0;width:7px;height:765px;background:#f0f1f3"></div><div class="abs" style="left:1673px;top:0;width:7px;height:369px;background:#c8d0da;border-radius:0 0 3px 3px"></div>
</div>

<div class="abs" style="left:1886px;top:764px;width:40px;height:143px;background:rgba(166,166,171,.82);border-radius:10px;z-index:9">
  <div class="abs" style="left:11.5px;top:11px;width:11px;height:11px;border-radius:50%;background:#12b75a"></div>
  <div class="abs" style="left:0;top:33px;width:40px;height:1px;background:rgba(255,255,255,.18)"></div>
  <div class="abs" style="left:11px;top:39px;width:11px;height:31px;border-radius:5.5px;background:linear-gradient(rgba(255,255,255,.13) 0,rgba(255,255,255,.13) 58%,#9fd43f 58%,#5ccf78 80%,#2fc4aa 100%)"></div>
  <div class="abs" style="left:0;top:77px;width:40px;height:1px;background:rgba(255,255,255,.18)"></div>
  <div class="abs" style="left:10px;top:85px;font-size:11px;color:#fff;line-height:12px">3.0</div>
  <svg class="abs" style="left:6px;top:98px" width="6" height="8" viewBox="0 0 6 8"><path d="M3 0L6 3.5H4V8H2V3.5H0z" fill="#3aa0ff"/></svg>
  <div class="abs" style="left:15px;top:97px;font-size:10px;color:#e8e8e8;line-height:11px">K/s</div>
  <div class="abs" style="left:7px;top:113px;font-size:11px;color:#fff;line-height:12px">11.9</div>
  <svg class="abs" style="left:6px;top:126px" width="6" height="8" viewBox="0 0 6 8"><path d="M3 8L6 4.5H4V0H2V4.5H0z" fill="#19b35a"/></svg>
  <div class="abs" style="left:15px;top:124px;font-size:10px;color:#e8e8e8;line-height:11px">K/s</div>
</div>
</body></html>
